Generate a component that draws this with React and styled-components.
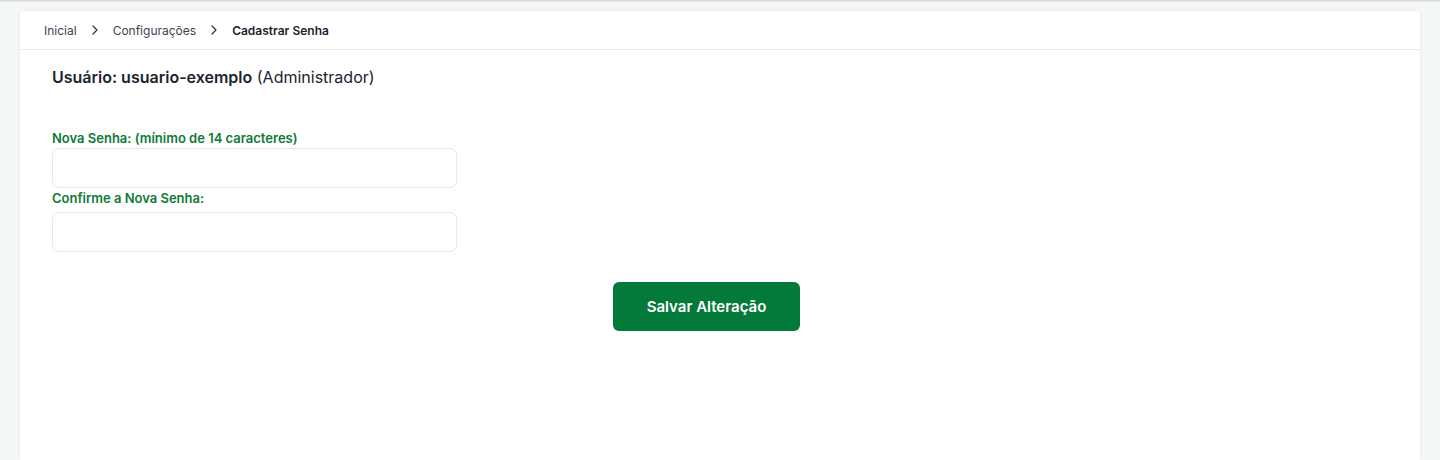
import React from 'react';
import styled, { createGlobalStyle } from 'styled-components';
import { ChevronRight } from 'lucide-react';

const GlobalStyle = createGlobalStyle`
  html, body {
    margin: 0;
    padding: 0;
    background: #f6f8f7;
    font-family: Inter, 'Noto Sans', sans-serif;
    color: #1c2430;
  }
  * { box-sizing: border-box; }
`;

// Page shell, with the shadow of the top header bleeding in
const Page = styled.div`
  min-height: 460px;
  padding: 11px 20px 0;
  box-shadow: inset 0 2px 2px -1px rgba(0, 0, 0, 0.18);
`;

const Card = styled.div`
  background: #fff;
  min-height: 449px;
  box-shadow: 0 0 4px rgba(0, 0, 0, 0.08);
`;

const Breadcrumb = styled.nav`
  display: flex;
  align-items: center;
  height: 39px;
  padding: 0 24px;
  border-bottom: 1px solid #e3ebe8;
  font-size: 12px;
  color: #3b4452;
`;

const Crumb = styled.span`
  font-weight: ${(p) => (p.$current ? 600 : 400)};
  color: ${(p) => (p.$current ? '#1c2430' : '#3b4452')};
`;

const Separator = styled.span`
  display: inline-flex;
  margin: 0 10px;
  color: #2a323d;
`;

const Content = styled.div`
  padding: 16px 59px 0 32px;
`;

const UserLine = styled.h2`
  margin: 0;
  font-size: 16px;
  font-weight: 400;
  line-height: 22px;
  color: #1c2430;
  strong { font-weight: 600; }
`;

const Form = styled.form`
  margin-top: 42px;
  display: flex;
  flex-direction: column;
`;

const Field = styled.div`
  display: flex;
  flex-direction: column;
  width: 405px;
  margin-bottom: 2px;
`;

const Label = styled.label`
  font-size: 13px;
  font-weight: 600;
  line-height: 16px;
  color: #0f7a37;
  margin-bottom: ${(p) => p.$space || 2}px;
`;

const Input = styled.input`
  height: 40px;
  border: 1px solid #e2e9e6;
  border-radius: 7px;
  padding: 0 12px;
  font-size: 14px;
  font-family: inherit;
  outline: none;
`;

const Actions = styled.div`
  display: flex;
  justify-content: center;
  margin-top: 28px;
`;

const SaveButton = styled.button`
  width: 187px;
  height: 49px;
  border: none;
  border-radius: 6px;
  background: #047a3a;
  color: #fff;
  font-family: inherit;
  font-size: 15px;
  font-weight: 600;
  cursor: pointer;
`;

const App = () => {
  return (
    <Page>
      <GlobalStyle />
      <Card>
        <Breadcrumb>
          <Crumb>Inicial</Crumb>
          <Separator><ChevronRight size={16} strokeWidth={1.8} /></Separator>
          <Crumb>Configurações</Crumb>
          <Separator><ChevronRight size={16} strokeWidth={1.8} /></Separator>
          <Crumb $current>Cadastrar Senha</Crumb>
        </Breadcrumb>

        <Content>
          <UserLine>
            <strong>Usuário: usuario-exemplo</strong> (Administrador)
          </UserLine>

          <Form onSubmit={(e) => e.preventDefault()}>
            <Field>
              <Label htmlFor="nova">Nova Senha: (mínimo de 14 caracteres)</Label>
              <Input id="nova" type="password" />
            </Field>
            <Field>
              <Label htmlFor="confirma" $space={6}>Confirme a Nova Senha:</Label>
              <Input id="confirma" type="password" />
            </Field>
            <Actions>
              <SaveButton type="submit">Salvar Alteração</SaveButton>
            </Actions>
          </Form>
        </Content>
      </Card>
    </Page>
  );
};

export default App;
